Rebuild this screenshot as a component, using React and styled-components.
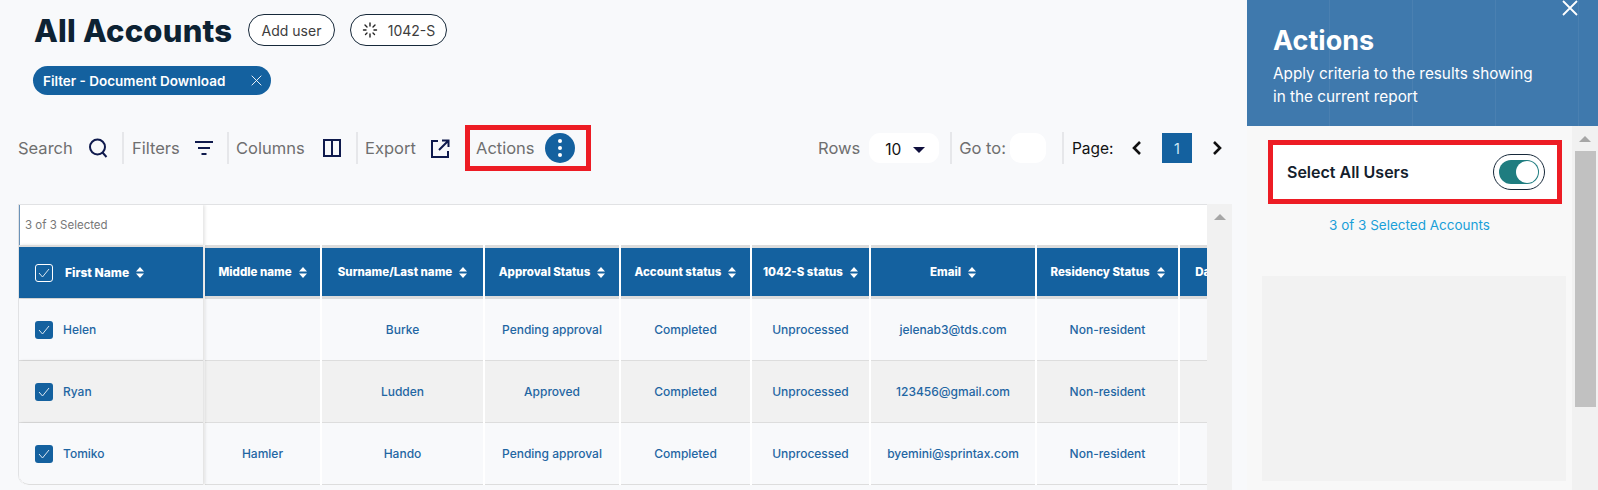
import React from 'react';
import styled, { createGlobalStyle } from 'styled-components';

const GlobalStyle = createGlobalStyle`
  html, body {
    margin: 0;
    padding: 0;
    height: 490px;
    overflow: hidden;
    background: #f8f9fb;
    font-family: Inter, "Noto Sans", sans-serif;
  }
  * { box-sizing: border-box; }
`;

const Page = styled.div`
  display: grid;
  grid-template-columns: 1247px 351px;
  height: 490px;
  overflow: hidden;
`;

const Main = styled.main`
  display: flex;
  flex-direction: column;
  padding: 14px 15px 0 18px;
  min-width: 0;
`;

const TitleRow = styled.div`
  display: flex;
  align-items: center;
  height: 32px;
  padding-left: 16px;
`;

const Title = styled.h1`
  margin: 0 10px 0 0;
  width: 204px;
  font-size: 31px;
  font-weight: 800;
  letter-spacing: 0.2px;
  color: #0d2233;
  white-space: nowrap;
`;

const Pill = styled.button`
  display: flex;
  align-items: center;
  justify-content: center;
  gap: 10px;
  height: 32px;
  width: ${(p) => p.$width}px;
  margin-right: 15px;
  padding: 0;
  border: 1px solid #17293a;
  border-radius: 16px;
  background: #fff;
  color: #3d3d3d;
  font: 400 14px Inter, sans-serif;
`;

const Chip = styled.div`
  display: flex;
  align-items: center;
  justify-content: space-between;
  width: 238px;
  height: 29px;
  margin: 20px 0 0 15px;
  padding: 0 9px 0 10px;
  border-radius: 15px;
  background: #14619f;
  color: #fff;
  font-size: 13.5px;
  font-weight: 600;
  white-space: nowrap;
`;

const Toolbar = styled.div`
  display: flex;
  align-items: center;
  height: 46px;
  margin-top: 30px;
`;

const ToolItem = styled.div`
  display: flex;
  align-items: center;
  justify-content: space-between;
  width: ${(p) => p.$width}px;
  margin-right: ${(p) => p.$after}px;
`;

const ToolLabel = styled.span`
  color: #6f6f6f;
  font-size: 16.5px;
  white-space: nowrap;
`;

const Divider = styled.span`
  flex: none;
  width: 2px;
  height: 32px;
  margin-right: ${(p) => p.$after}px;
  background: #e6e7ea;
`;

const ActionsBox = styled.div`
  display: flex;
  align-items: center;
  justify-content: space-between;
  width: 126px;
  height: 46px;
  margin-left: 3px;
  padding: 0 11px 0 6px;
  border: 5px solid #ed1c24;
`;

const RoundButton = styled.span`
  display: flex;
  align-items: center;
  justify-content: center;
  width: 30px;
  height: 30px;
  border-radius: 50%;
  background: #14619f;
`;

const Pager = styled.div`
  display: flex;
  align-items: center;
  margin-left: 227px;
`;

const SelectBox = styled.div`
  display: flex;
  align-items: center;
  justify-content: space-between;
  width: 70px;
  height: 30px;
  margin: 0 11px 0 9px;
  padding: 3px 14px 0 16px;
  border-radius: 11px;
  background: #fff;
  color: #111;
  font-size: 15.5px;
`;

const GoInput = styled.span`
  width: 36px;
  height: 30px;
  margin: 0 16px 0 4px;
  border-radius: 11px;
  background: #fff;
`;

const PageLabel = styled.span`
  width: 44px;
  margin-right: 16px;
  color: #111;
  font-size: 15.5px;
`;

const PageNumber = styled.span`
  display: flex;
  align-items: center;
  justify-content: center;
  width: 30px;
  height: 30px;
  margin: 0 20px;
  background: #14619f;
  color: #cfe8f6;
  font-size: 14.5px;
`;

const TableArea = styled.div`
  display: grid;
  grid-template-columns: 1189px 25px;
  height: 286px;
  margin-top: 33px;
`;

const Table = styled.div`
  overflow: hidden;
  height: 281px;
  border: 1px solid #e1e2e4;
  border-right: 0;
  border-bottom: 0;
  border-radius: 0 0 0 10px;
  background: #fff;
`;

const columns = '184px 115px 161px 134px 129px 117px 164px 141px 116px';

const SelectedRow = styled.div`
  height: 40px;
  background: #fff;
`;

const SelectedCell = styled.div`
  display: flex;
  align-items: center;
  width: 184px;
  height: 40px;
  padding-left: 5px;
  border-left: 1px solid #6c93b8;
  box-shadow: 2px 0 3px rgba(0, 0, 0, 0.1);
  color: #777;
  font-size: 11.5px;
`;

const Row = styled.div`
  display: grid;
  grid-template-columns: ${columns};
  column-gap: 2px;
  height: ${(p) => p.$height}px;
  background: #fff;
`;

const HeadCell = styled.div`
  display: flex;
  align-items: center;
  justify-content: center;
  gap: 7px;
  border-top: 3px solid #dcdcdc;
  border-bottom: 3px solid #dcdcdc;
  background: #14619f;
  color: #fff;
  font-size: 11.5px;
  font-weight: 800;
  white-space: nowrap;
`;

const FirstHead = styled(HeadCell)`
  position: relative;
  z-index: 1;
  justify-content: flex-start;
  gap: 7px;
  padding-left: 16px;
  border-top-width: 2px;
  border-bottom-width: 1px;
  font-size: 12px;
  box-shadow: 2px 0 3px rgba(0, 0, 0, 0.12);
`;

const Cell = styled.div`
  display: flex;
  align-items: center;
  justify-content: center;
  border-bottom: 1px solid #dddddd;
  background: ${(p) => (p.$alt ? '#f1f1f1' : '#f8f9fb')};
  color: #1f66a3;
  font-size: 12px;
  font-weight: 500;
  white-space: nowrap;
`;

const FirstCell = styled(Cell)`
  position: relative;
  z-index: 1;
  justify-content: flex-start;
  gap: 10px;
  padding-left: 16px;
  border-radius: ${(p) => (p.$last ? '0 0 0 10px' : '0')};
  box-shadow: 2px 0 3px rgba(0, 0, 0, 0.12);
`;

const CheckBox = styled.span`
  display: flex;
  align-items: center;
  justify-content: center;
  flex: none;
  width: 18px;
  height: 18px;
  margin-right: ${(p) => (p.$head ? '5px' : '0')};
  border: ${(p) => (p.$head ? '1px solid #fff' : '0')};
  border-radius: 3px;
  background: #14619f;
`;

const ScrollTrack = styled.div`
  display: flex;
  justify-content: center;
  padding-top: ${(p) => p.$top}px;
  background: #f1f1f1;
`;

const ScrollArrow = styled.span`
  width: 0;
  height: 0;
  border-left: 6px solid transparent;
  border-right: 6px solid transparent;
  border-bottom: 6px solid #a6a6a6;
`;

const Panel = styled.aside`
  display: grid;
  grid-template-rows: 126px 1fr;
  height: 490px;
  background: #f8f8f8;
`;

const PanelHead = styled.header`
  position: relative;
  padding: 24px 0 0 26px;
  color: #fff;
  background-color: #3f79ad;
  background-image: repeating-linear-gradient(
    90deg,
    transparent 0 82px,
    #4a80b1 82px 103px,
    transparent 103px 103px
  );
  background-size: 83px 100%;
`;

const CloseButton = styled.span`
  position: absolute;
  top: 0;
  right: 20px;
  line-height: 0;
`;

const PanelTitle = styled.h2`
  margin: 0 0 5px;
  font-size: 27px;
  line-height: 33px;
  font-weight: 700;
`;

const PanelText = styled.p`
  margin: 0;
  font-size: 15.3px;
  line-height: 23px;
`;

const PanelBody = styled.div`
  display: grid;
  grid-template-columns: 325px 26px;
  min-height: 0;
`;

const PanelContent = styled.div`
  display: flex;
  flex-direction: column;
  padding-top: 14px;
`;

const SelectCard = styled.div`
  display: flex;
  align-items: center;
  justify-content: space-between;
  width: 294px;
  height: 64px;
  margin-left: 21px;
  padding: 0 12px 0 14px;
  border: 5px solid #ed1c24;
  background: #fff;
`;

const SelectLabel = styled.span`
  color: #14202c;
  font-size: 16px;
  font-weight: 600;
`;

const Toggle = styled.span`
  display: flex;
  align-items: center;
  width: 52px;
  height: 36px;
  padding: 0 5px;
  border: 1px solid #17293a;
  border-radius: 18px;
  background: #fff;
`;

const ToggleTrack = styled.span`
  display: flex;
  justify-content: flex-end;
  width: 40px;
  height: 24px;
  padding: 1px;
  border-radius: 12px;
  background: #1f7d80;
`;

const ToggleKnob = styled.span`
  width: 22px;
  height: 22px;
  border-radius: 50%;
  background: #fff;
`;

const SelectedCount = styled.div`
  margin-top: 12px;
  color: #1a9fd8;
  font-size: 13.5px;
  line-height: 18px;
  text-align: center;
`;

const EmptyBox = styled.div`
  width: 304px;
  height: 205px;
  margin: 42px 0 0 15px;
  background: #f2f2f2;
`;

const PanelScroll = styled.div`
  display: flex;
  flex-direction: column;
  align-items: center;
  padding-top: 10px;
  background: #f1f1f1;
`;

const PanelThumb = styled.span`
  width: 21px;
  height: 256px;
  margin-top: 9px;
  background: #c1c1c1;
`;

const Navy = '#0f1a4d';

const SearchIcon = () => (
  <svg width="20" height="20" viewBox="0 0 20 20" fill="none" stroke={Navy} strokeWidth="2">
    <circle cx="9.5" cy="9" r="7.5" />
    <path d="M14.5 14.5l4 4.5" />
  </svg>
);

const FilterIcon = () => (
  <svg width="18" height="14" viewBox="0 0 18 14" fill={Navy}>
    <rect x="0" y="0" width="18" height="2" />
    <rect x="3" y="6" width="12" height="2" />
    <rect x="6.5" y="12" width="5" height="2" />
  </svg>
);

const ColumnsIcon = () => (
  <svg width="18" height="18" viewBox="0 0 18 18" fill="none" stroke={Navy} strokeWidth="2">
    <rect x="1" y="1" width="16" height="16" />
    <path d="M9 1v16" />
  </svg>
);

const ExportIcon = () => (
  <svg width="19" height="19" viewBox="0 0 19 19" fill="none" stroke={Navy} strokeWidth="2">
    <path d="M7 2H1v16h16v-6" />
    <path d="M8 11l9-9M11 1.500h6.500V8" />
  </svg>
);

const SpinnerIcon = () => (
  <svg width="16" height="16" viewBox="0 0 16 16" fill="none" stroke="#222" strokeWidth="1.4" strokeLinecap="round">
    <path d="M8 1v3M8 12v3M1.500 8h2.500M12 8h2.500M3 3l2 2M13 3l-2 2M3.500 12.500l1.500-1.500M12.500 12.500l-1.500-1.500" />
  </svg>
);

const CloseIcon = ({ size, width = 1.3 }) => (
  <svg width={size} height={size} viewBox="0 0 16 16" fill="none" stroke="#fff" strokeWidth={width}>
    <path d="M1 1l14 14M15 1L1 15" />
  </svg>
);

const DotsIcon = () => (
  <svg width="6" height="20" viewBox="0 0 6 20" fill="#fff">
    <circle cx="3" cy="3" r="2" />
    <circle cx="3" cy="10" r="2" />
    <circle cx="3" cy="17" r="2" />
  </svg>
);

const CaretIcon = () => (
  <svg width="12" height="6" viewBox="0 0 12 6" fill="#0f0f3d">
    <path d="M0 0h12L6 6z" />
  </svg>
);

const ChevronIcon = ({ flip }) => (
  <svg width="10" height="14" viewBox="0 0 10 14" fill="none" stroke="#111" strokeWidth="2.6">
    <path d={flip ? 'M2 1l6 6-6 6' : 'M8 1L2 7l6 6'} />
  </svg>
);

const SortIcon = () => (
  <svg width="8" height="11" viewBox="0 0 8 11" fill="#fff">
    <path d="M4 0l4 4.500H0zM4 11L0 6.500h8z" />
  </svg>
);

const CheckIcon = () => (
  <svg width="12" height="10" viewBox="0 0 12 10" fill="none" stroke="#dbe7f1" strokeWidth="1">
    <path d="M1 5l3.500 4L11 1" />
  </svg>
);

const heads = [
  'Middle name',
  'Surname/Last name',
  'Approval Status',
  'Account status',
  '1042-S status',
  'Email',
  'Residency Status',
  'Date of birth',
];

const rows = [
  ['Helen', '', 'Burke', 'Pending approval', 'Completed', 'Unprocessed', 'jelenab3@tds.com', 'Non-resident', '01/01/1990'],
  ['Ryan', '', 'Ludden', 'Approved', 'Completed', 'Unprocessed', '123456@gmail.com', 'Non-resident', '01/01/1990'],
  ['Tomiko', 'Hamler', 'Hando', 'Pending approval', 'Completed', 'Unprocessed', 'byemini@sprintax.com', 'Non-resident', '01/01/1990'],
];

const App = () => {
  return (
    <Page>
      <GlobalStyle />
      <Main>
        <TitleRow>
          <Title>All Accounts</Title>
          <Pill $width={87}>Add user</Pill>
          <Pill $width={97}>
            <SpinnerIcon />
            1042-S
          </Pill>
        </TitleRow>
        <Chip>
          Filter - Document Download
          <CloseIcon size={11} />
        </Chip>
        <Toolbar>
          <ToolItem $width={90} $after={14}>
            <ToolLabel>Search</ToolLabel>
            <SearchIcon />
          </ToolItem>
          <Divider $after={8} />
          <ToolItem $width={81} $after={14}>
            <ToolLabel>Filters</ToolLabel>
            <FilterIcon />
          </ToolItem>
          <Divider $after={7} />
          <ToolItem $width={105} $after={15}>
            <ToolLabel>Columns</ToolLabel>
            <ColumnsIcon />
          </ToolItem>
          <Divider $after={7} />
          <ToolItem $width={85} $after={12}>
            <ToolLabel>Export</ToolLabel>
            <ExportIcon />
          </ToolItem>
          <ActionsBox>
            <ToolLabel>Actions</ToolLabel>
            <RoundButton>
              <DotsIcon />
            </RoundButton>
          </ActionsBox>
          <Pager>
            <ToolLabel>Rows</ToolLabel>
            <SelectBox>
              10
              <CaretIcon />
            </SelectBox>
            <Divider $after={7} />
            <ToolLabel>Go to:</ToolLabel>
            <GoInput />
            <Divider $after={8} />
            <PageLabel>Page:</PageLabel>
            <ChevronIcon />
            <PageNumber>1</PageNumber>
            <ChevronIcon flip />
          </Pager>
        </Toolbar>
        <TableArea>
          <Table>
            <SelectedRow>
              <SelectedCell>3 of 3 Selected</SelectedCell>
            </SelectedRow>
            <Row $height={54}>
              <FirstHead>
                <CheckBox $head>
                  <CheckIcon />
                </CheckBox>
                First Name
                <SortIcon />
              </FirstHead>
              {heads.map((head) => (
                <HeadCell key={head}>
                  {head}
                  <SortIcon />
                </HeadCell>
              ))}
            </Row>
            {rows.map((row, index) => (
              <Row key={row[0]} $height={62}>
                <FirstCell $alt={index === 1} $last={index === 2}>
                  <CheckBox>
                    <CheckIcon />
                  </CheckBox>
                  {row[0]}
                </FirstCell>
                {row.slice(1).map((value, col) => (
                  <Cell key={col} $alt={index === 1}>
                    {value}
                  </Cell>
                ))}
              </Row>
            ))}
          </Table>
          <ScrollTrack $top={10}>
            <ScrollArrow />
          </ScrollTrack>
        </TableArea>
      </Main>
      <Panel>
        <PanelHead>
          <CloseButton>
            <CloseIcon size={16} width={1.8} />
          </CloseButton>
          <PanelTitle>Actions</PanelTitle>
          <PanelText>
            Apply criteria to the results showing
            <br />
            in the current report
          </PanelText>
        </PanelHead>
        <PanelBody>
          <PanelContent>
            <SelectCard>
              <SelectLabel>Select All Users</SelectLabel>
              <Toggle>
                <ToggleTrack>
                  <ToggleKnob />
                </ToggleTrack>
              </Toggle>
            </SelectCard>
            <SelectedCount>3 of 3 Selected Accounts</SelectedCount>
            <EmptyBox />
          </PanelContent>
          <PanelScroll>
            <ScrollArrow />
            <PanelThumb />
          </PanelScroll>
        </PanelBody>
      </Panel>
    </Page>
  );
};

export default App;
